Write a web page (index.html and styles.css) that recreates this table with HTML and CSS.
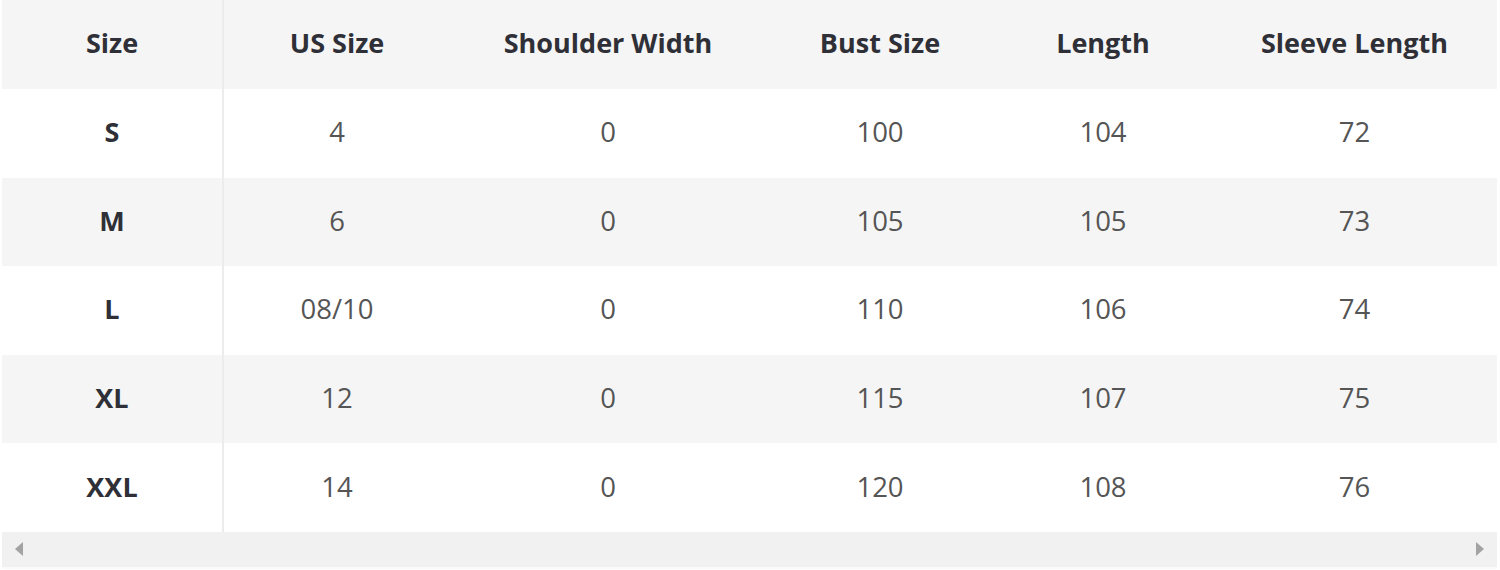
FILE: index.html
```html
<!DOCTYPE html>
<html>
<head>
<meta charset="utf-8">
<link rel="stylesheet" href="styles.css">
</head>
<body>
<div class="wrap">
  <table class="chart">
    <colgroup>
      <col class="c1"><col class="c2"><col class="c3"><col class="c4"><col class="c5"><col class="c6">
    </colgroup>
    <thead>
      <tr><th class="first">Size</th><th>US Size</th><th>Shoulder Width</th><th>Bust Size</th><th>Length</th><th>Sleeve Length</th></tr>
    </thead>
    <tbody>
      <tr><th class="first">S</th><td>4</td><td>0</td><td>100</td><td>104</td><td>72</td></tr>
      <tr class="alt"><th class="first">M</th><td>6</td><td>0</td><td>105</td><td>105</td><td>73</td></tr>
      <tr><th class="first">L</th><td>08/10</td><td>0</td><td>110</td><td>106</td><td>74</td></tr>
      <tr class="alt"><th class="first">XL</th><td>12</td><td>0</td><td>115</td><td>107</td><td>75</td></tr>
      <tr><th class="first">XXL</th><td>14</td><td>0</td><td>120</td><td>108</td><td>76</td></tr>
    </tbody>
  </table>
  <div class="scrollbar">
    <span class="arrow left"></span>
    <span class="arrow right"></span>
  </div>
</div>
</body>
</html>
```

FILE: styles.css
```css
html, body {
  margin: 0;
  padding: 0;
  background: #fff;
}
body {
  font-family: "Open Sans", "Noto Sans", sans-serif;
}
.wrap {
  width: 1495px;
  margin-left: 2px;
}
.chart {
  width: 1495px;
  border-collapse: collapse;
  table-layout: fixed;
}
.c1 { width: 221px; }
.c2 { width: 227px; }
.c3 { width: 316px; }
.c4 { width: 228px; }
.c5 { width: 218px; }
.c6 { width: 285px; }
.chart th, .chart td {
  height: 88.6px;
  padding: 0 0 3px;
  box-sizing: border-box;
  text-align: center;
  vertical-align: middle;
  font-size: 27px;
}
.chart thead tr {
  background: #f5f5f5;
}
.chart thead th {
  height: 89px;
  padding-bottom: 4px;
  font-weight: 700;
  color: #2f3037;
}
.chart tr.alt {
  background: #f5f5f5;
}
.chart tbody th {
  font-weight: 700;
  color: #2f3037;
}
.chart td {
  font-weight: 400;
  font-size: 27.5px;
  color: #555;
}
.chart .first {
  border-right: 2px solid #ececec;
}
.scrollbar {
  height: 35px;
  background: #f1f1f1;
  display: flex;
  justify-content: space-between;
  align-items: center;
  padding: 0 13px;
  border-bottom: 2px solid #fafafa;
}
.arrow {
  width: 0;
  height: 0;
  border-top: 7px solid transparent;
  border-bottom: 7px solid transparent;
}
.arrow.left {
  border-right: 8px solid #a3a3a3;
}
.arrow.right {
  border-left: 8px solid #a3a3a3;
}
```
